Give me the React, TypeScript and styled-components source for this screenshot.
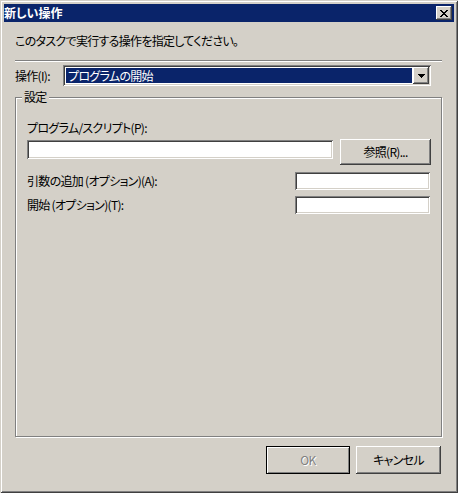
import React from "react";
import styled, { createGlobalStyle } from "styled-components";

const GlobalStyle = createGlobalStyle`
  html, body {
    margin: 0;
    padding: 0;
    background: #d4d0c8;
  }
  body {
    font-family: "Noto Sans CJK JP", "Noto Sans", sans-serif;
    font-size: 12px;
    font-feature-settings: "palt";
    letter-spacing: -0.7px;
    color: #000;
  }
  * { box-sizing: border-box; }
`;

const bevelRaised = `
  background: #d4d0c8;
  box-shadow: inset -1px -1px 0 #404040, inset 1px 1px 0 #ffffff,
    inset -2px -2px 0 #808080, inset 2px 2px 0 #d4d0c8;
`;

const bevelSunken = `
  background: #ffffff;
  box-shadow: inset 1px 1px 0 #808080, inset -1px -1px 0 #ffffff,
    inset 2px 2px 0 #404040, inset -2px -2px 0 #d4d0c8;
`;

const Window = styled.div`
  width: 458px;
  height: 493px;
  padding: 4px;
  display: flex;
  flex-direction: column;
  background: #d4d0c8;
  box-shadow: inset 1px 1px 0 #d4d0c8, inset -1px -1px 0 #404040,
    inset 2px 2px 0 #ffffff, inset -2px -2px 0 #808080;
`;

const TitleBar = styled.div`
  height: 18px;
  background: #0a246a;
  display: flex;
  align-items: center;
  justify-content: space-between;
  padding: 0 2px 0 0;
`;

const TitleText = styled.span`
  color: #ffffff;
  font-weight: bold;
  font-size: 12px;
  letter-spacing: 0;
  line-height: 14px;
`;

const CloseButton = styled.div`
  width: 16px;
  height: 14px;
  display: flex;
  align-items: center;
  justify-content: center;
  padding-right: 1px;
  ${bevelRaised}
`;

const Body = styled.div`
  flex: 1;
  display: flex;
  flex-direction: column;
  padding: 0 12px 15px 11px;
`;

const Description = styled.div`
  margin-top: 12px;
  line-height: 14px;
`;

const Separator = styled.div`
  margin-top: 12px;
  height: 2px;
  border-top: 1px solid #808080;
  border-bottom: 1px solid #ffffff;
`;

const ActionRow = styled.div`
  margin-top: 3px;
  display: flex;
  align-items: center;
  height: 21px;
`;

const FieldLabel = styled.label<{ $width?: number }>`
  line-height: 14px;
  white-space: nowrap;
  ${(p) => (p.$width ? `width: ${p.$width}px;` : "")}
`;

const Combo = styled.div`
  width: 368px;
  height: 21px;
  padding: 2px;
  display: flex;
  ${bevelSunken}
`;

const ComboValue = styled.div`
  flex: 1;
  margin: 1px;
  padding-left: 2px;
  background: #0a246a;
  color: #ffffff;
  line-height: 15px;
  white-space: nowrap;
`;

const DropButton = styled.div`
  width: 16px;
  height: 17px;
  display: flex;
  align-items: center;
  justify-content: center;
  ${bevelRaised}
`;

const GroupBox = styled.fieldset`
  flex: 1;
  margin: 4px 0 0 0;
  padding: 0;
  min-width: 0;
  border: 1px solid #808080;
  box-shadow: inset 1px 1px 0 #ffffff, 1px 1px 0 #ffffff;
`;

const GroupLegend = styled.legend`
  margin-left: 6px;
  padding: 0 2px;
  line-height: 14px;
  background: #d4d0c8;
`;

const GroupBody = styled.div`
  display: flex;
  flex-direction: column;
  padding: 17px 10px 0 11px;
`;

const ProgramRow = styled.div`
  margin-top: 4px;
  display: flex;
  align-items: flex-start;
`;

const TextBox = styled.div<{ $width: number; $height: number }>`
  width: ${(p) => p.$width}px;
  height: ${(p) => p.$height}px;
  ${bevelSunken}
`;

const ProgramBox = styled(TextBox)`
  margin-top: 1px;
`;

const OptionRow = styled.div<{ $gap: number }>`
  margin-top: ${(p) => p.$gap}px;
  display: flex;
  align-items: center;
  justify-content: space-between;
  padding-right: 1px;
`;

const PushButton = styled.div<{ $width: number; $height: number }>`
  width: ${(p) => p.$width}px;
  height: ${(p) => p.$height}px;
  display: flex;
  align-items: center;
  justify-content: center;
  line-height: 14px;
  ${bevelRaised}
`;

const BrowseButton = styled(PushButton)`
  margin-left: 7px;
`;

const DefaultButton = styled(PushButton)`
  border: 1px solid #000000;
  color: #808080;
  text-shadow: 1px 1px 0 #ffffff;
  box-shadow: inset 1px 1px 0 #ffffff, inset -1px -1px 0 #808080;
`;

const ButtonRow = styled.div`
  margin-top: 9px;
  display: flex;
  justify-content: flex-end;
  gap: 6px;
  padding-right: 1px;
`;

const CloseGlyph = () => {
  const rows = [
    "11000011",
    "01100110",
    "00111100",
    "00011000",
    "00111100",
    "01100110",
    "11000011",
  ];
  return (
    <svg width="8" height="7" viewBox="0 0 8 7" shapeRendering="crispEdges">
      {rows.flatMap((r, y) =>
        r.split("").map((c, x) =>
          c === "1" ? <rect key={`${x}-${y}`} x={x} y={y} width="1" height="1" fill="#000" /> : null
        )
      )}
    </svg>
  );
};

const DropGlyph = () => (
  <svg width="7" height="4" viewBox="0 0 7 4" shapeRendering="crispEdges">
    <rect x="0" y="0" width="7" height="1" fill="#000" />
    <rect x="1" y="1" width="5" height="1" fill="#000" />
    <rect x="2" y="2" width="3" height="1" fill="#000" />
    <rect x="3" y="3" width="1" height="1" fill="#000" />
  </svg>
);

export default function App() {
  return (
    <>
      <GlobalStyle />
      <Window>
        <TitleBar>
          <TitleText>新しい操作</TitleText>
          <CloseButton>
            <CloseGlyph />
          </CloseButton>
        </TitleBar>
        <Body>
          <Description>このタスクで実行する操作を指定してください。</Description>
          <Separator />
          <ActionRow>
            <FieldLabel $width={48}>操作(I):</FieldLabel>
            <Combo>
              <ComboValue>プログラムの開始</ComboValue>
              <DropButton>
                <DropGlyph />
              </DropButton>
            </Combo>
          </ActionRow>
          <GroupBox>
            <GroupLegend>設定</GroupLegend>
            <GroupBody>
              <FieldLabel>プログラム/スクリプト(P):</FieldLabel>
              <ProgramRow>
                <ProgramBox $width={306} $height={19} />
                <BrowseButton $width={91} $height={26}>参照(R)...</BrowseButton>
              </ProgramRow>
              <OptionRow $gap={7}>
                <FieldLabel>引数の追加 (オプション)(A):</FieldLabel>
                <TextBox $width={135} $height={18} />
              </OptionRow>
              <OptionRow $gap={6}>
                <FieldLabel>開始 (オプション)(T):</FieldLabel>
                <TextBox $width={135} $height={18} />
              </OptionRow>
            </GroupBody>
          </GroupBox>
          <ButtonRow>
            <DefaultButton $width={84} $height={28}>OK</DefaultButton>
            <PushButton $width={85} $height={28}>キャンセル</PushButton>
          </ButtonRow>
        </Body>
      </Window>
    </>
  );
}
